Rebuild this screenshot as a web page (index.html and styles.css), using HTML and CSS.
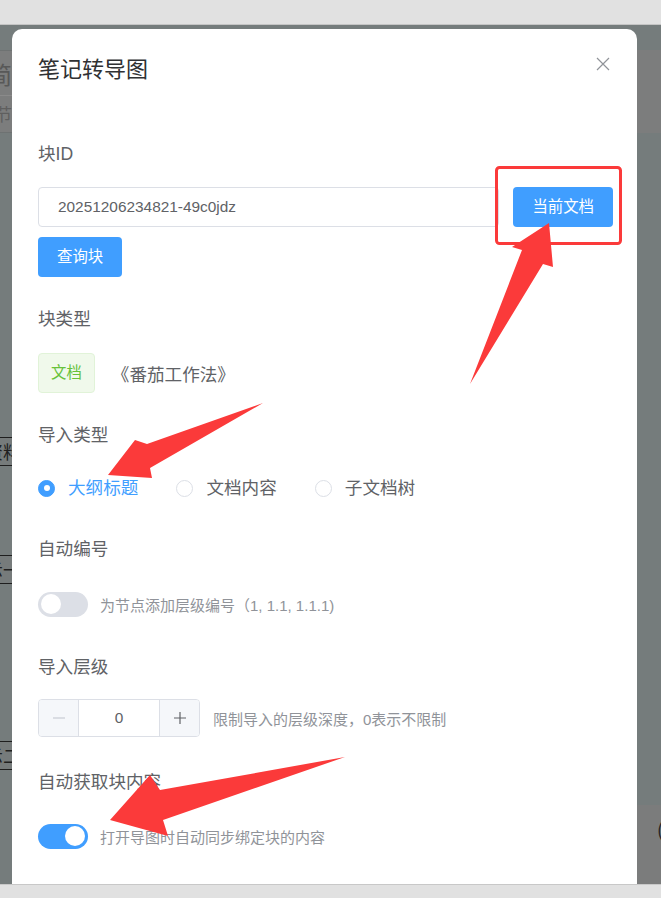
FILE: index.html
```html
<!DOCTYPE html>
<html lang="zh-CN">
<head>
<meta charset="utf-8">
<title>笔记转导图</title>
<link rel="stylesheet" href="styles.css">
</head>
<body>
<div class="page">
  <div class="topbar"></div>
  <div class="stage">
    <div class="frag frag-tl"><span class="frag-g1">简</span><span class="frag-line"></span><span class="frag-g2">节</span></div>
    <div class="frag frag-tr"></div>
    <div class="frag frag-box box1"><span>资料</span></div>
    <div class="frag frag-box box2"><span>标示一</span></div>
    <div class="frag frag-box box3"><span>标示二</span></div>
    <div class="frag frag-br"><span>(</span></div>

    <div class="modal">
      <div class="modal-header">
        <h2 class="modal-title">笔记转导图</h2>
        <span class="close" aria-label="关闭">
          <svg width="14" height="14" viewBox="0 0 14 14"><path d="M1 1 L13 13 M13 1 L1 13" stroke="#909399" stroke-width="1.2" fill="none"/></svg>
        </span>
      </div>
      <div class="modal-body">
        <div class="item">
          <div class="label">块ID</div>
          <div class="id-row">
            <div class="input">20251206234821-49c0jdz</div>
            <button class="btn">当前文档</button>
          </div>
          <button class="btn btn-query">查询块</button>
        </div>

        <div class="item">
          <div class="label label-tight">块类型</div>
          <div class="type-row">
            <span class="tag">文档</span>
            <span class="doc-name">《番茄工作法》</span>
          </div>
        </div>

        <div class="item item-short">
          <div class="label">导入类型</div>
          <div class="radio-group">
            <label class="radio is-checked"><span class="radio-dot"></span><span class="radio-text">大纲标题</span></label>
            <label class="radio"><span class="radio-dot"></span><span class="radio-text">文档内容</span></label>
            <label class="radio"><span class="radio-dot"></span><span class="radio-text">子文档树</span></label>
          </div>
        </div>

        <div class="item item-short">
          <div class="label">自动编号</div>
          <div class="switch-row switch-row-tall">
            <span class="switch"><span class="knob"></span></span>
            <span class="hint">为节点添加层级编号（1, 1.1, 1.1.1)</span>
          </div>
        </div>

        <div class="item item-long">
          <div class="label label-num">导入层级</div>
          <div class="num-row">
            <div class="num">
              <span class="num-btn num-minus"><svg width="14" height="14" viewBox="0 0 14 14"><path d="M1 7 H13" stroke="#c0c4cc" stroke-width="1.2"/></svg></span>
              <span class="num-value">0</span>
              <span class="num-btn num-plus"><svg width="14" height="14" viewBox="0 0 14 14"><path d="M1 7 H13 M7 1 V13" stroke="#606266" stroke-width="1.2"/></svg></span>
            </div>
            <span class="hint hint-num">限制导入的层级深度，0表示不限制</span>
          </div>
        </div>

        <div class="item">
          <div class="label label-tight">自动获取块内容</div>
          <div class="switch-row">
            <span class="switch is-on"><span class="knob"></span></span>
            <span class="hint">打开导图时自动同步绑定块的内容</span>
          </div>
        </div>
      </div>
    </div>
  </div>
  <div class="bottombar"></div>

  <svg class="annot" width="661" height="898" viewBox="0 0 661 898">
    <rect x="496.5" y="167.5" width="124" height="76" rx="3" ry="3" fill="none" stroke="#fb3a3a" stroke-width="3"/>
    <polygon points="470,384 522,250 512,247 549,223 553,267 543,264" fill="#fb3a3a"/>
    <polygon points="263,403 147,444 135,440 108,475 152,478 150,468" fill="#fb3a3a"/>
    <polygon points="345,757 160,790 150,775 110,820 168,836 163,820" fill="#fb3a3a"/>
  </svg>
</div>
</body>
</html>
```

FILE: styles.css
```css
html, body {
  margin: 0;
  padding: 0;
}

body {
  font-family: "Liberation Sans", "Noto Sans CJK SC", sans-serif;
}

.page {
  position: relative;
  height: 898px;
  display: flex;
  flex-direction: column;
  background: #757c7c;
  overflow: hidden;
}

.topbar {
  flex: none;
  height: 24px;
  background: #e1e1e1;
  border-bottom: 1px solid #c4c4c4;
}

.stage {
  flex: 1;
  position: relative;
  overflow: hidden;
}

.bottombar {
  flex: none;
  height: 13px;
  background: #e1e1e1;
  border-top: 1px solid #c8c8c8;
}

/* background page fragments behind the overlay */
.frag {
  position: absolute;
  z-index: 0;
  box-sizing: border-box;
  font-family: "Noto Sans CJK SC", sans-serif;
}

.frag-tl {
  left: 0;
  top: 25px;
  width: 40px;
  height: 83px;
  background: #7c7d7d;
  border-top: 1px solid #6e7272;
  border-bottom: 1px solid #6e7272;
}

.frag-g1 {
  position: absolute;
  left: -12px;
  top: 8px;
  font-size: 24px;
  line-height: 30px;
  color: #585858;
}

.frag-line {
  position: absolute;
  left: 0;
  right: 0;
  top: 44px;
  height: 1px;
  background: #8a8a8a;
}

.frag-g2 {
  position: absolute;
  left: -5px;
  top: 51px;
  font-size: 17px;
  line-height: 24px;
  color: #5f5f5f;
}

.frag-tr {
  left: 630px;
  top: 25px;
  width: 40px;
  height: 83px;
  background: #7c7d7d;
  border-radius: 6px;
}

.frag-box {
  left: -60px;
  width: 90px;
  height: 29px;
  border-top: 1px solid #1e1e1e;
  border-bottom: 1px solid #1e1e1e;
  background: #767b7b;
  color: #1f1f1f;
  font-size: 18px;
  line-height: 27px;
  text-align: right;
  padding-right: 9px;
  white-space: nowrap;
}

.box1 { top: 412px; }
.box2 { top: 530px; }
.box3 { top: 716px; }

.frag-br {
  left: 630px;
  top: 780px;
  width: 40px;
  height: 90px;
  background: #7b7c7c;
  color: #222;
  font-size: 18px;
  line-height: 24px;
  padding: 12px 0 0 27px;
}

/* modal */
.modal {
  position: relative;
  z-index: 1;
  margin: 4px 0 0 12px;
  width: 625px;
  box-sizing: border-box;
  background: #fff;
  border-radius: 10px 10px 0 0;
  padding: 0 24px 40px 26px;
}

.modal-header {
  display: flex;
  justify-content: space-between;
  align-items: flex-start;
  padding-top: 27px;
}

.modal-title {
  margin: 0;
  font-size: 22px;
  line-height: 28px;
  font-weight: 400;
  color: #303133;
}

.close {
  display: block;
  width: 14px;
  height: 14px;
  margin: 1px 3px 0 0;
}

.close svg {
  display: block;
}

.modal-body {
  padding-top: 59px;
}

.item {
  margin-bottom: 31px;
}

.item-short {
  margin-bottom: 30px;
}

.item-long {
  margin-bottom: 34px;
}

.label {
  font-size: 17.6px;
  line-height: 22px;
  color: #606266;
  margin-bottom: 22px;
}

.label-tight {
  margin-bottom: 23px;
}

.label-num {
  margin-bottom: 21px;
}

.id-row {
  display: flex;
  gap: 14px;
}

.input {
  flex: 1;
  height: 40px;
  box-sizing: border-box;
  border: 1px solid #dcdfe6;
  border-radius: 4px;
  padding: 0 19px;
  display: flex;
  align-items: center;
  font-size: 15.4px;
  color: #606266;
}

.btn {
  height: 40px;
  padding: 0 19px;
  border: none;
  border-radius: 4px;
  background: #409eff;
  color: #fff;
  font-family: inherit;
  font-size: 15.4px;
  line-height: 40px;
  cursor: pointer;
}

.btn-query {
  display: block;
  margin-top: 10px;
}

.type-row {
  display: flex;
  align-items: center;
  height: 40px;
}

.tag {
  height: 40px;
  box-sizing: border-box;
  padding: 0 12px;
  border: 1px solid #e1f3d8;
  border-radius: 4px;
  background: #f0f9eb;
  color: #67c23a;
  font-size: 15.4px;
  line-height: 38px;
}

.doc-name {
  margin-left: 17px;
  font-size: 17.6px;
  color: #606266;
}

.radio-group {
  display: flex;
  align-items: center;
  gap: 38px;
  height: 40px;
}

.radio {
  display: flex;
  align-items: center;
  gap: 13px;
}

.radio-dot {
  width: 17px;
  height: 17px;
  box-sizing: border-box;
  border: 1px solid #dcdfe6;
  border-radius: 50%;
  background: #fff;
  display: flex;
  align-items: center;
  justify-content: center;
}

.radio-text {
  font-size: 17.6px;
  line-height: 22px;
  color: #606266;
}

.radio.is-checked .radio-dot {
  background: #409eff;
  border-color: #409eff;
}

.radio.is-checked .radio-dot::after {
  content: "";
  width: 6px;
  height: 6px;
  border-radius: 50%;
  background: #fff;
}

.radio.is-checked .radio-text {
  color: #409eff;
}

.switch-row {
  display: flex;
  align-items: center;
  height: 40px;
}

.switch-row-tall {
  height: 44px;
}

.switch {
  position: relative;
  flex: none;
  width: 50px;
  height: 25px;
  border-radius: 13px;
  background: #dcdfe6;
}

.switch .knob {
  position: absolute;
  top: 2.5px;
  left: 3px;
  width: 20px;
  height: 20px;
  border-radius: 50%;
  background: #fff;
}

.switch.is-on {
  background: #409eff;
}

.switch.is-on .knob {
  left: 27px;
}

.hint {
  margin-left: 12px;
  font-size: 15px;
  color: #909399;
  white-space: nowrap;
}

.num-row {
  display: flex;
  align-items: center;
}

.num {
  display: flex;
  width: 162px;
  height: 38px;
  box-sizing: border-box;
  border: 1px solid #dcdfe6;
  border-radius: 4px;
  overflow: hidden;
}

.num-btn {
  width: 39px;
  flex: none;
  background: #f5f7fa;
  display: flex;
  align-items: center;
  justify-content: center;
}

.num-minus {
  border-right: 1px solid #dcdfe6;
}

.num-plus {
  border-left: 1px solid #dcdfe6;
}

.num-value {
  flex: 1;
  display: flex;
  align-items: center;
  justify-content: center;
  font-size: 15.4px;
  color: #606266;
}

.hint-num {
  margin-left: 13px;
}

.annot {
  position: absolute;
  left: 0;
  top: 0;
  z-index: 5;
  pointer-events: none;
}
```
